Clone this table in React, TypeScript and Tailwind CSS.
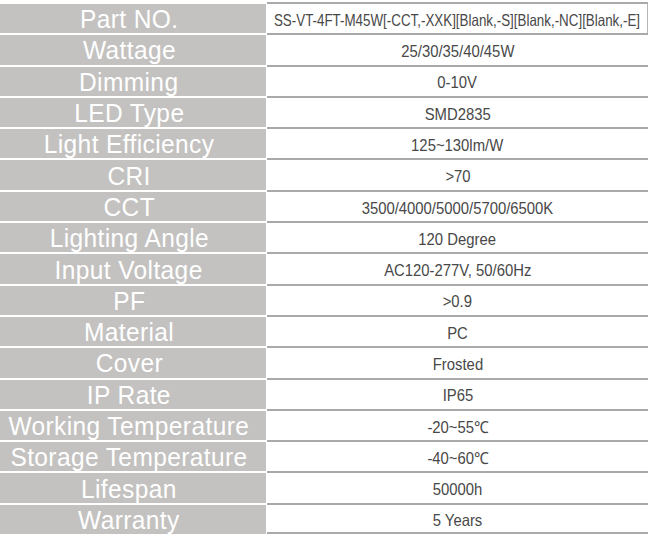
const specs: [string, string][] = [
  ['Part NO.', 'SS-VT-4FT-M45W[-CCT,-XXK][Blank,-S][Blank,-NC][Blank,-E]'],
  ['Wattage', '25/30/35/40/45W'],
  ['Dimming', '0-10V'],
  ['LED Type', 'SMD2835'],
  ['Light Efficiency', '125~130lm/W'],
  ['CRI', '>70'],
  ['CCT', '3500/4000/5000/5700/6500K'],
  ['Lighting Angle', '120 Degree'],
  ['Input Voltage', 'AC120-277V, 50/60Hz'],
  ['PF', '>0.9'],
  ['Material', 'PC'],
  ['Cover', 'Frosted'],
  ['IP Rate', 'IP65'],
  ['Working Temperature', '-20~55℃'],
  ['Storage Temperature', '-40~60℃'],
  ['Lifespan', '50000h'],
  ['Warranty', '5 Years'],
];

export default function App() {
  return (
    <div className="w-[650px] h-[540px] bg-white pt-[2px] font-['Liberation_Sans',Arial,sans-serif]">
      {specs.map(([label, value], i) => {
        const first = i === 0;
        const last = i === specs.length - 1;
        return (
          <div key={label} className="flex h-[31.3px]">
            <div className="w-[266px] shrink-0 border-t-2 border-white bg-[#c3c2c0] pt-[2px] flex items-center justify-center text-white text-[25px] leading-none tracking-[0.4px] whitespace-nowrap">
              <span className="inline-block scale-x-[0.98] -translate-x-[4px]">{label}</span>
            </div>
            <div
              className={`ml-[1px] mr-[2px] min-w-0 flex-1 border-t-2 border-[#a9a9a9] pt-[3px] flex items-center justify-center text-[#484848] whitespace-nowrap ${
                last ? 'border-b-2' : ''
              } ${first ? 'border-r border-r-[#b5b5b5]' : ''}`}
            >
              {first ? (
                <span className="inline-block text-[16.5px] scale-x-[0.81]">{value}</span>
              ) : (
                <span className="inline-block text-[16.5px] scale-x-[0.9]">{value}</span>
              )}
            </div>
          </div>
        );
      })}
    </div>
  );
}
